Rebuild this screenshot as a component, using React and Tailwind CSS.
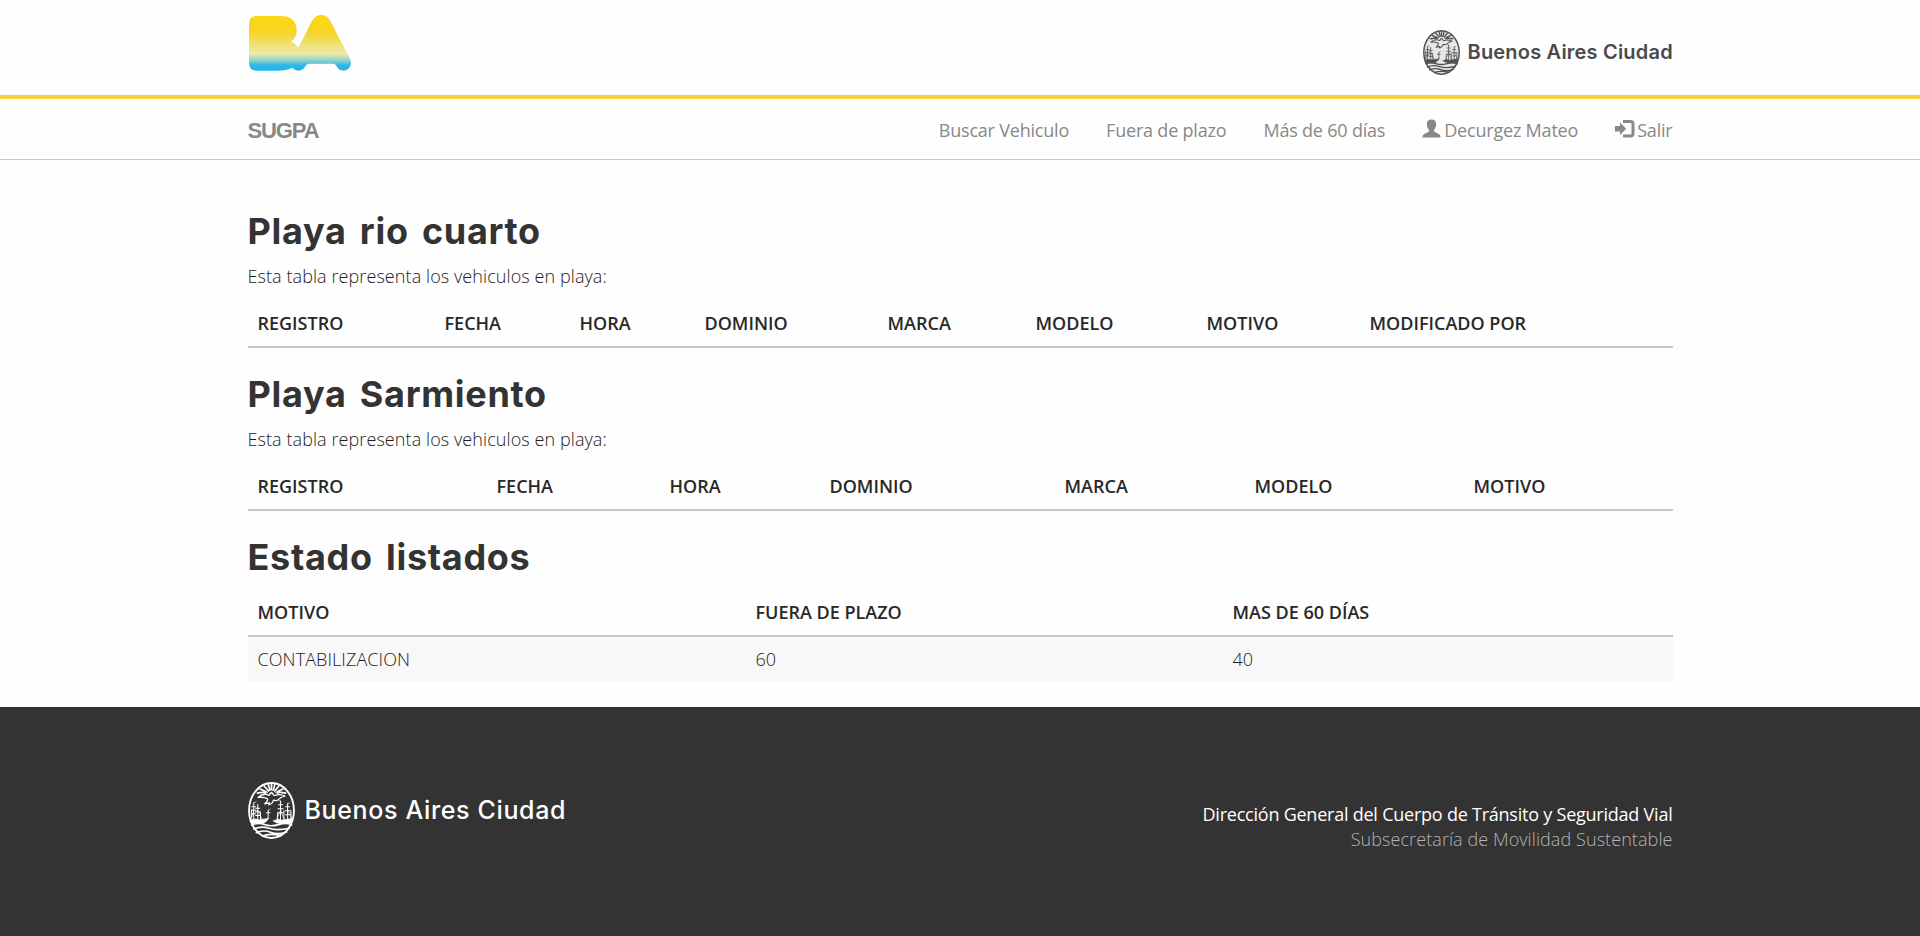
import React from "react";

function Seal({ className, ink, paper }) {
  return (
    <svg viewBox="0 0 140 170" className={className} fill="none" stroke={ink} strokeLinecap="round" strokeLinejoin="round">
      <ellipse cx="70" cy="85" rx="67" ry="82" fill={paper} strokeWidth="5.5" />
      <g strokeWidth="5">
        <path d="M28 33Q46 29 53 33M36 21L54 29M48 12L60 25M60 7L65 22M70 5V21M80 7L76 22M92 12L81 25M104 21L87 29M112 33Q94 29 87 33" />
        <path d="M58 31Q62 23 70 24Q78 23 82 31" strokeWidth="3" />
      </g>
      <path d="M30 46Q44 33 58 38Q64 42 66 35Q70 29 74 35Q76 42 83 39Q96 35 110 42Q98 44 92 51Q86 58 76 54Q72 66 62 68L64 62L50 65Q60 56 58 50Q48 44 30 46Z" strokeWidth="4" />
      <g strokeWidth="3">
        <path d="M17 62V114M29 66V114M97 57V114M118 64V114M37 90V114M60 84V106M10 82V108M128 84V110M88 92V114M107 86V114" />
        <path d="M11 74H23M10 84H24M12 95H23M23 78H35M22 89H36M23 100H35M91 68H103M89 80H105M90 92H104M112 74H124M111 86H125M112 98H124M55 92H65" />
        <path d="M18 62L24 59M98 58L92 55M119 65L124 62M61 84L66 81M17 84L10 108M29 84L42 112M97 84L86 110M118 84L130 106M97 84L108 112" strokeWidth="2" />
      </g>
      <path d="M7 114Q20 107 34 113L62 108Q56 119 45 124H12ZM76 116Q92 108 100 114L131 109L129 124H93Q82 122 76 116Z" fill={ink} strokeWidth="2" />
      <path d="M11 128Q30 120 49 127T91 127T130 128M17 140Q39 130 62 138T123 138M25 151Q46 142 67 150T115 149M43 161Q64 152 98 160" strokeWidth="5" />
    </svg>
  );
}

function BaLogo() {
  return (
    <svg viewBox="0 0 310 168" className="h-14 w-[104px]" preserveAspectRatio="none">
      <defs>
        <linearGradient id="ba" x1="0" y1="0" x2="0" y2="1">
          <stop offset="0" stopColor="#fbd814" />
          <stop offset=".27" stopColor="#f9d41f" />
          <stop offset=".38" stopColor="#f3d83f" />
          <stop offset=".69" stopColor="#ecebab" />
          <stop offset=".8" stopColor="#9fd5c5" />
          <stop offset=".91" stopColor="#2bb7e8" />
          <stop offset="1" stopColor="#24b5ea" />
        </linearGradient>
      </defs>
      <path
        fill="url(#ba)"
        d="M26 3H100C130 3 145 22 145 47C145 62 139 72 129 79Q143 87 150 99L191 17Q200 0 218 0Q236 0 245 17L304 132Q309 141 306 150Q301 166 284 167Q272 167 266 157C261 147 258 146 249 146H185C176 146 173 149 169 157Q162 167 151 167Q140 167 132 158Q115 167 90 167H26Q3 167 3 144V26Q3 3 26 3Z"
      />
    </svg>
  );
}

function UserIcon() {
  return (
    <svg viewBox="0 0 19 19" className="-mt-1 mr-[3px] h-[19px] w-[19px]" fill="currentColor">
      <path d="M9.5.5C12.6.5 14.2 2.5 14.2 5.4C14.2 8 13.1 9.7 12 10.9V12.6L17.2 15.2Q18.6 16 18.6 18.4H.4Q.4 16 1.8 15.2L7 12.6V10.9C5.9 9.7 4.8 8 4.8 5.4C4.8 2.5 6.4.5 9.5.5Z" />
    </svg>
  );
}

function LogoutIcon() {
  return (
    <svg viewBox="0 0 20 18" className="-mt-0.5 mr-0.5 h-[18px] w-5" fill="currentColor">
      <path d="M0 6H5V2.6L11.2 8.8L5 15V11.6H0Z" />
      <path d="M8 1.6H15.5Q18 1.6 18 4.1V13.4Q18 15.9 15.5 15.9H8" fill="none" stroke="currentColor" strokeWidth="3" />
    </svg>
  );
}

function Table({ cols, rows = [] }) {
  return (
    <table className="w-full table-fixed border-collapse text-left">
      <thead>
        <tr className="border-b-2 border-[#c8c8c8]">
          {cols.map(([name, width]) => (
            <th key={name} className={`${width} px-2.5 pt-2 pb-2.5 font-semibold tracking-normal text-[#282828]`}>
              {name}
            </th>
          ))}
        </tr>
      </thead>
      <tbody>
        {rows.map((r) => (
          <tr key={r[0]} className="bg-[#f8f8f8]">
            {r.map((c) => (
              <td key={c} className="px-2.5 pt-2.5 pb-[9px]">{c}</td>
            ))}
          </tr>
        ))}
      </tbody>
    </table>
  );
}

function Title({ children }) {
  return (
    <h2 className="font-['Inter',sans-serif] text-[36px] leading-10 font-bold tracking-[0.7px] text-[#333] [word-spacing:4px]">
      {children}
    </h2>
  );
}

const rioCuarto = [
  ["REGISTRO", "w-[187px]"],
  ["FECHA", "w-[135px]"],
  ["HORA", "w-[125px]"],
  ["DOMINIO", "w-[183px]"],
  ["MARCA", "w-[148px]"],
  ["MODELO", "w-[171px]"],
  ["MOTIVO", "w-[163px]"],
  ["MODIFICADO POR", "w-auto"],
];

const sarmiento = [
  ["REGISTRO", "w-[239px]"],
  ["FECHA", "w-[173px]"],
  ["HORA", "w-[160px]"],
  ["DOMINIO", "w-[235px]"],
  ["MARCA", "w-[190px]"],
  ["MODELO", "w-[219px]"],
  ["MOTIVO", "w-auto"],
];

const estado = [
  ["MOTIVO", "w-[498px]"],
  ["FUERA DE PLAZO", "w-[477px]"],
  ["MAS DE 60 DÍAS", "w-auto"],
];

export default function App() {
  return (
    <div className="flex h-[936px] flex-col overflow-hidden bg-[#fefefe] font-['Open_Sans',sans-serif] text-[18px] leading-[25.7px] font-light tracking-[0.08px] text-[#1c1c1c]">
      <header className="h-[99px] border-b-4 border-[#f4d03a]">
        <div className="mx-auto flex w-[1425px] justify-between">
          <div className="pt-[15px]"><BaLogo /></div>
          <div className="flex items-center pt-[30px] text-[#4a4a4a]">
            <Seal className="mr-2 h-[45px] w-[37px]" ink="#505050" paper="#e8e8e8" />
            <span className="w-[205px] font-['Inter',sans-serif] text-[20px] font-semibold tracking-[0.2px] whitespace-nowrap">Buenos Aires Ciudad</span>
          </div>
        </div>
      </header>
      <nav className="h-[61px] border-b border-[#c8c8c8] text-[#888]">
        <div className="mx-auto flex h-full w-[1425px] items-center justify-between pt-[3px]">
          <span className="font-['Liberation_Sans',sans-serif] text-[22px] font-bold tracking-[-1.1px]">SUGPA</span>
          <div className="flex items-center gap-[37px] font-normal tracking-[-0.2px]">
            <span>Buscar Vehiculo</span>
            <span>Fuera de plazo</span>
            <span>Más de 60 días</span>
            <span className="flex items-center"><UserIcon />Decurgez Mateo</span>
            <span className="flex items-center"><LogoutIcon />Salir</span>
          </div>
        </div>
      </nav>
      <main className="mx-auto h-[547px] w-[1425px] pt-[51px]">
        <section className="h-[163px]">
          <Title>Playa rio cuarto</Title>
          <p className="mt-[13px] mb-[13px]">Esta tabla representa los vehiculos en playa:</p>
          <Table cols={rioCuarto} />
        </section>
        <section className="h-[163px]">
          <Title>Playa Sarmiento</Title>
          <p className="mt-[13px] mb-[13px]">Esta tabla representa los vehiculos en playa:</p>
          <Table cols={sarmiento} />
        </section>
        <section>
          <Title>Estado listados</Title>
          <div className="mt-[14.5px]">
            <Table cols={estado} rows={[["CONTABILIZACION", "60", "40"]]} />
          </div>
        </section>
      </main>
      <footer className="flex-1 bg-[#333]">
        <div className="mx-auto flex w-[1425px] justify-between">
          <div className="flex items-start pt-[75px] text-white">
            <Seal className="mr-2.5 h-[57px] w-[47px]" ink="#fff" paper="#333" />
            <span className="pt-4 font-['Inter',sans-serif] text-[25px] font-medium tracking-[0.65px] whitespace-nowrap">Buenos Aires Ciudad</span>
          </div>
          <div className="pt-[95px] text-right leading-[25px]">
            <p className="font-normal tracking-[-0.23px] text-white">Dirección General del Cuerpo de Tránsito y Seguridad Vial</p>
            <p className="text-[#b4b4b4]">Subsecretaría de Movilidad Sustentable</p>
          </div>
        </div>
      </footer>
    </div>
  );
}
